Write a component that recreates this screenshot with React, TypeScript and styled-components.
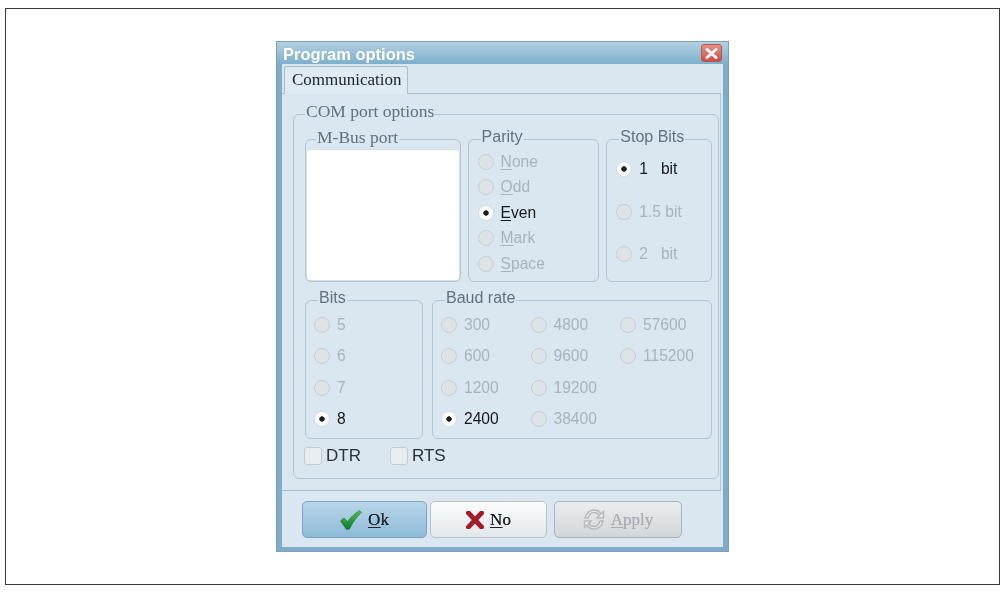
import React from 'react';
import styled, { createGlobalStyle } from 'styled-components';

const GlobalStyle = createGlobalStyle`
  html, body {
    margin: 0;
    padding: 0;
    background: #fff;
  }
`;

const parity = ['None', 'Odd', 'Even', 'Mark', 'Space'];
const stopBits = [
  { label: '1   bit', checked: true },
  { label: '1.5 bit', checked: false },
  { label: '2   bit', checked: false },
];
const bits = ['5', '6', '7', '8'];
const baud = ['300', '600', '1200', '2400', '4800', '9600', '19200', '38400', '57600', '115200'];

const Radio = ({ label, checked, mnemonic }: { label: string; checked?: boolean; mnemonic?: boolean }) => (
  <RadioRow $active={checked}>
    <RadioDot $checked={checked} />
    <span>{mnemonic ? <Mnemonic>{label[0]}</Mnemonic> : null}{mnemonic ? label.slice(1) : label}</span>
  </RadioRow>
);

const App = () => {
  return (
    <Page>
      <GlobalStyle />
      <Frame>
        <Window>
          <TitleBar>
            <Title>Program options</Title>
            <CloseBtn>
              <svg width="13" height="11" viewBox="0 0 13 11">
                <path d="M2 1.5 L11 9.5 M11 1.5 L2 9.5" stroke="#fff" strokeWidth="3" strokeLinecap="round" />
              </svg>
            </CloseBtn>
          </TitleBar>
          <Body>
            <TabStrip>
              <Tab>Communication</Tab>
            </TabStrip>
            <Pane>
              <ComGroup>
                <ComLegend>COM port options</ComLegend>
                <GroupRow $gap={7} $height={143}>
                  <Group $width={156}>
                    <SerifLegend>M-Bus port</SerifLegend>
                    <ListBox />
                  </Group>
                  <Group $width={132}>
                    <Legend>Parity</Legend>
                    <ParityList>
                      {parity.map((p) => (
                        <Radio key={p} label={p} checked={p === 'Even'} mnemonic />
                      ))}
                    </ParityList>
                  </Group>
                  <Group $width={106}>
                    <Legend>Stop Bits</Legend>
                    <StopList>
                      {stopBits.map((s) => (
                        <Radio key={s.label} label={s.label} checked={s.checked} />
                      ))}
                    </StopList>
                  </Group>
                </GroupRow>
                <GroupRow $gap={9} $height={139}>
                  <Group $width={118}>
                    <Legend>Bits</Legend>
                    <RateGrid>
                      {bits.map((b) => (
                        <Radio key={b} label={b} checked={b === '8'} />
                      ))}
                    </RateGrid>
                  </Group>
                  <Group $width={280}>
                    <Legend>Baud rate</Legend>
                    <RateGrid>
                      {baud.map((b) => (
                        <Radio key={b} label={b} checked={b === '2400'} />
                      ))}
                    </RateGrid>
                  </Group>
                </GroupRow>
                <CheckRow>
                  <CheckItem>
                    <CheckBox />
                    DTR
                  </CheckItem>
                  <CheckItem>
                    <CheckBox />
                    RTS
                  </CheckItem>
                </CheckRow>
              </ComGroup>
            </Pane>
            <Footer>
              <Button $variant="primary" $width={125}>
                <svg width="22" height="20" viewBox="0 0 22 20">
                  <defs>
                    <linearGradient id="okGreen" x1="0" y1="0" x2="0" y2="1">
                      <stop offset="0" stopColor="#4cc04a" />
                      <stop offset="1" stopColor="#0b7a2c" />
                    </linearGradient>
                  </defs>
                  <path d="M0.5 11 L4 8 L7.5 11.5 C10.5 7.5 14.5 3.5 19.5 0.5 L21.5 2.5 C16 7.5 12.5 12.5 9.5 19 L6.5 19.5 Z" fill="url(#okGreen)" stroke="#0d6426" strokeWidth="0.5" />
                </svg>
                <BtnText><Mnemonic>O</Mnemonic>k</BtnText>
              </Button>
              <Button $variant="plain" $width={117}>
                <svg width="18" height="18" viewBox="0 0 18 18">
                  <path d="M2.5 2 L15.5 16 M15.5 2 L2.5 16" stroke="#a51c28" strokeWidth="4.8" strokeLinecap="square" />
                </svg>
                <BtnText><Mnemonic>N</Mnemonic>o</BtnText>
              </Button>
              <ApplyButton $variant="disabled" $width={128}>
                <svg width="22" height="23" viewBox="0 0 22 23" fill="none" stroke="#b4babd" strokeWidth="1.5">
                  <path d="M2 10 C3 5 7 2 11 2 C14 2 16.5 3.5 18 6 L20.5 3.5 L20.5 10 L14 10 L16.5 7.5 C15 5.5 13 4.5 11 4.5 C8 4.5 6 7 5 10 Z" fill="#eceff0" />
                  <path d="M20 13 C19 18 15 21 11 21 C8 21 5.5 19.5 4 17 L1.5 19.5 L1.5 13 L8 13 L5.5 15.5 C7 17.5 9 18.5 11 18.5 C14 18.5 16 16 17 13 Z" fill="#eceff0" />
                </svg>
                <BtnText><Mnemonic>A</Mnemonic>pply</BtnText>
              </ApplyButton>
            </Footer>
          </Body>
        </Window>
      </Frame>
    </Page>
  );
};

export default App;

const Page = styled.div`
  box-sizing: border-box;
  width: 1005px;
  height: 592px;
  padding: 8px 5px 7px;
  background: #fff;
`;

const Frame = styled.div`
  box-sizing: border-box;
  height: 577px;
  border: 1px solid #3a3a3a;
  display: flex;
  justify-content: center;
  padding-top: 32px;
`;

const Window = styled.div`
  box-sizing: border-box;
  width: 453px;
  height: 511px;
  display: flex;
  flex-direction: column;
  background: #7fadc9;
  border: 1px solid #7f9fb5;
  padding: 0 5px 4px 5px;
  filter: blur(0.4px);
`;

const TitleBar = styled.div`
  box-sizing: border-box;
  flex: none;
  display: flex;
  align-items: center;
  justify-content: space-between;
  height: 22px;
  margin: 0 -5px;
  padding: 0 6px;
  background: linear-gradient(#b4d0e2, #7dafcd);
`;

const Title = styled.div`
  position: relative;
  top: 1px;
  font: bold 16.5px 'Liberation Sans', Arial, sans-serif;
  color: #fff;
  text-shadow: 0 0 2px #8fb4cb;
`;

const CloseBtn = styled.div`
  box-sizing: border-box;
  width: 21px;
  height: 18px;
  display: flex;
  align-items: center;
  justify-content: center;
  background: linear-gradient(#ea9288, #cf4c42);
  border: 1px solid #b4574f;
  border-radius: 3px;
`;

const Body = styled.div`
  flex: 1;
  display: flex;
  flex-direction: column;
  background: #dae6f0;
`;

const TabStrip = styled.div`
  display: flex;
  height: 29px;
  padding-left: 2px;
  align-items: flex-end;
`;

const Tab = styled.div`
  box-sizing: border-box;
  width: 124px;
  height: 28px;
  margin-bottom: -1px;
  padding: 3px 0 0 7px;
  border: 1px solid #a9bfce;
  border-bottom: none;
  border-radius: 3px 3px 0 0;
  background: #e0eaf3;
  position: relative;
  font: 17px 'Liberation Serif', 'Times New Roman', serif;
  color: #1c2228;
`;

const Pane = styled.div`
  box-sizing: border-box;
  height: 398px;
  margin-right: 2px;
  padding: 20px 1px 11px 11px;
  border-top: 1px solid #a9bfce;
  border-bottom: 1px solid #a9bfce;
  border-right: 1px solid #b4c8d6;
`;

const ComGroup = styled.div`
  box-sizing: border-box;
  position: relative;
  height: 365px;
  padding: 24px 6px 0 11px;
  border: 1px solid #b3c5d2;
  border-radius: 6px;
  display: flex;
  flex-direction: column;
  gap: 18px;
`;

const GroupRow = styled.div<{ $gap: number; $height: number }>`
  display: flex;
  gap: ${(p) => p.$gap}px;
  height: ${(p) => p.$height}px;
`;

const Group = styled.div<{ $width: number }>`
  box-sizing: border-box;
  position: relative;
  width: ${(p) => p.$width}px;
  border: 1px solid #b3c5d2;
  border-radius: 6px;
`;

const Legend = styled.div`
  position: absolute;
  top: -13px;
  left: 12px;
  padding: 0 1px;
  background: #dae6f0;
  font: 16px/20px 'Liberation Sans', Arial, sans-serif;
  color: #5f7280;
`;

const SerifLegend = styled(Legend)`
  left: 10px;
  font: 17.5px/20px 'Liberation Serif', 'Times New Roman', serif;
`;

const ComLegend = styled(SerifLegend)`
  top: -14px;
  left: 11px;
`;

const ListBox = styled.div`
  height: 130px;
  margin: 10px 1px 0;
  background: #fff;
  border-radius: 2px;
  box-shadow: 0 0 1px #a5b5c0;
`;

const ParityList = styled.div`
  display: grid;
  grid-auto-rows: 25.5px;
  align-items: center;
  padding: 9px 0 0 9px;
`;

const StopList = styled.div`
  display: grid;
  grid-auto-rows: 42.5px;
  align-items: center;
  padding: 8px 0 0 9px;
`;

const RateGrid = styled.div`
  display: grid;
  grid-auto-flow: column;
  grid-template-rows: repeat(4, 31.5px);
  grid-auto-columns: 89.5px;
  align-items: center;
  padding: 8px 0 0 8px;
`;

const RadioRow = styled.div<{ $active?: boolean }>`
  display: flex;
  align-items: center;
  gap: 7px;
  white-space: pre;
  font: 15.6px 'Liberation Sans', Arial, sans-serif;
  color: ${(p) => (p.$active ? '#15191c' : '#a9b3ba')};
`;

const RadioDot = styled.span<{ $checked?: boolean }>`
  box-sizing: border-box;
  flex: none;
  width: 16px;
  height: 16px;
  border-radius: 50%;
  border: 1px solid ${(p) => (p.$checked ? '#d5dde3' : '#c8d0d5')};
  background: ${(p) =>
    p.$checked
      ? 'radial-gradient(circle, #1c1f22 0 2.4px, #fff 3px)'
      : '#dde3e6'};
`;

const Mnemonic = styled.span`
  text-decoration: underline;
  text-underline-offset: 2px;
`;

const CheckRow = styled.div`
  display: flex;
  gap: 29px;
  margin-top: -11px;
  margin-left: -1px;
`;

const CheckItem = styled.div`
  display: flex;
  align-items: center;
  gap: 4px;
  font: 17px 'Liberation Sans', Arial, sans-serif;
  color: #2a3036;
`;

const CheckBox = styled.span`
  box-sizing: border-box;
  width: 18px;
  height: 18px;
  border: 1px solid #c3ccd2;
  border-radius: 3px;
  background: #e9eef1;
`;

const Footer = styled.div`
  display: flex;
  gap: 3px;
  padding: 10px 0 0 20px;
`;

const variants = {
  primary: 'background: linear-gradient(#b9d6ea, #8ebad7); border-color: #7ba5c2;',
  plain: 'background: linear-gradient(#fbfcfd, #e2e8ec); border-color: #b7c4ce;',
  disabled: 'background: linear-gradient(#ebeeef, #d2d6d9); border-color: #a9b1b6; color: #a8afb4;',
};

const Button = styled.div<{ $variant: keyof typeof variants; $width: number }>`
  box-sizing: border-box;
  width: ${(p) => p.$width}px;
  height: 37px;
  display: flex;
  align-items: center;
  justify-content: center;
  gap: 6px;
  border: 1px solid;
  border-radius: 5px;
  color: #1d2327;
  font: 17px 'Liberation Serif', 'Times New Roman', serif;
  ${(p) => variants[p.$variant]}
`;

const ApplyButton = styled(Button)`
  margin-left: 4px;
`;

const BtnText = styled.span`
  line-height: 1;
  text-shadow: 0 0 0.6px currentColor;
`;
